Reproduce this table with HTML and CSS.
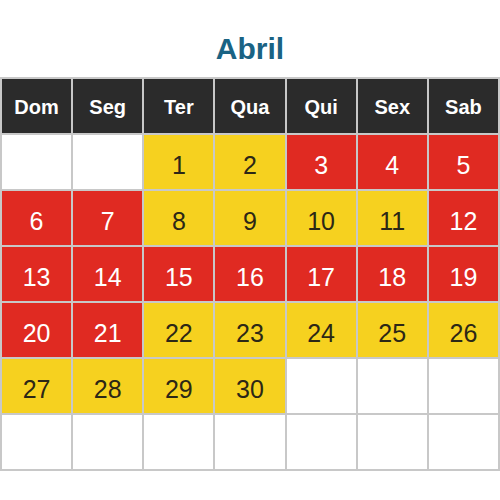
FILE: index.html
```html
<!DOCTYPE html>
<html lang="pt">
<head>
<meta charset="utf-8">
<title>Abril</title>
<link rel="stylesheet" href="styles.css">
</head>
<body>
<div class="page">
  <h1 class="title">Abril</h1>
  <div class="cal">
    <div class="hd">Dom</div><div class="hd">Seg</div><div class="hd">Ter</div><div class="hd">Qua</div><div class="hd">Qui</div><div class="hd">Sex</div><div class="hd">Sab</div>

    <div class="d"></div><div class="d"></div><div class="d y">1</div><div class="d y">2</div><div class="d r">3</div><div class="d r">4</div><div class="d r">5</div>

    <div class="d r">6</div><div class="d r">7</div><div class="d y">8</div><div class="d y">9</div><div class="d y">10</div><div class="d y">11</div><div class="d r">12</div>

    <div class="d r">13</div><div class="d r">14</div><div class="d r">15</div><div class="d r">16</div><div class="d r">17</div><div class="d r">18</div><div class="d r">19</div>

    <div class="d r">20</div><div class="d r">21</div><div class="d y">22</div><div class="d y">23</div><div class="d y">24</div><div class="d y">25</div><div class="d y">26</div>

    <div class="d y">27</div><div class="d y">28</div><div class="d y">29</div><div class="d y">30</div><div class="d"></div><div class="d"></div><div class="d"></div>

    <div class="d"></div><div class="d"></div><div class="d"></div><div class="d"></div><div class="d"></div><div class="d"></div><div class="d"></div>
  </div>
</div>
</body>
</html>
```
FILE: styles.css
```css
html, body {
  margin: 0;
  padding: 0;
  background: #ffffff;
}
.page {
  width: 500px;
  font-family: "Liberation Sans", Arial, sans-serif;
}
.title {
  margin: 0;
  height: 77px;
  box-sizing: border-box;
  padding-top: 31px;
  text-align: center;
  font-size: 30px;
  line-height: 36px;
  font-weight: bold;
  color: #1a6384;
}
.cal {
  display: grid;
  grid-template-columns: repeat(7, 1fr);
  grid-auto-rows: 54px;
  gap: 2px;
  padding: 2px;
  background: #c8c8c8;
  width: 500px;
  box-sizing: border-box;
}
.hd {
  background: #2b2b2b;
  color: #ffffff;
  font-weight: bold;
  font-size: 20px;
  display: flex;
  align-items: center;
  justify-content: center;
  padding-top: 3px;
}
.d {
  background: #ffffff;
  font-size: 25px;
  display: flex;
  align-items: center;
  justify-content: center;
  padding-top: 6px;
}
.y {
  background: #f6d11f;
  color: #2c2716;
}
.r {
  background: #e02a22;
  color: #ffffff;
}
```
